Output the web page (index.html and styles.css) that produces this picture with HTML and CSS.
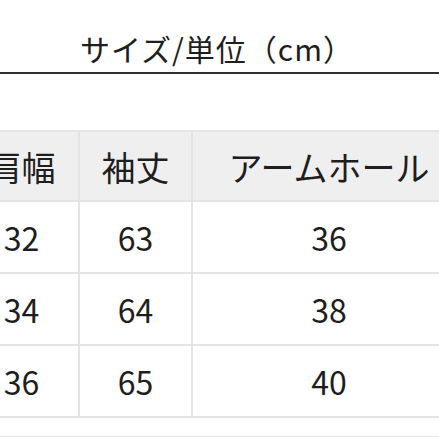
FILE: index.html
```html
<!DOCTYPE html>
<html lang="ja">
<head>
<meta charset="utf-8">
<link rel="stylesheet" href="styles.css">
</head>
<body>
<div class="title">サイズ/単位（cm）</div>
<table class="size-table">
  <thead>
    <tr><th class="c1">肩幅</th><th class="c2">袖丈</th><th class="c3">アームホール</th></tr>
  </thead>
  <tbody>
    <tr><td>32</td><td>63</td><td>36</td></tr>
    <tr><td>34</td><td>64</td><td>38</td></tr>
    <tr><td>36</td><td>65</td><td>40</td></tr>
  </tbody>
</table>
<div class="foot"></div>
</body>
</html>
```

FILE: styles.css
```css
html, body {
  margin: 0;
  padding: 0;
  background: #ffffff;
  overflow: hidden;
}
body {
  width: 439px;
  height: 439px;
  font-family: "Noto Sans CJK JP", "Noto Sans", sans-serif;
  color: #1e1e1e;
}
.title {
  font-size: 30px;
  line-height: 30px;
  letter-spacing: 1px;
  padding: 33px 0 9px 80px;
  border-bottom: 2px solid #2e2e2e;
  white-space: nowrap;
}
.size-table {
  margin-top: 56px;
  margin-left: -35px;
  border-collapse: separate;
  border-spacing: 0;
  table-layout: fixed;
  border-top: 2px solid #e4e4e4;
  width: 502px;
}
.size-table th,
.size-table td {
  box-sizing: border-box;
  padding: 0;
  text-align: center;
  vertical-align: middle;
  border-right: 2px solid #e4e4e4;
  border-bottom: 2px solid #e4e4e4;
  font-weight: 400;
  white-space: nowrap;
}
.size-table th {
  background: #efefef;
  height: 70px;
  font-size: 34px;
}
.size-table td {
  height: 72px;
  font-size: 32px;
}
.c1 { width: 115px; }
.c2 { width: 113px; }
.c3 { width: 274px; }
.foot {
  margin-top: 18px;
  border-top: 1px solid #e6e6e6;
}
```
